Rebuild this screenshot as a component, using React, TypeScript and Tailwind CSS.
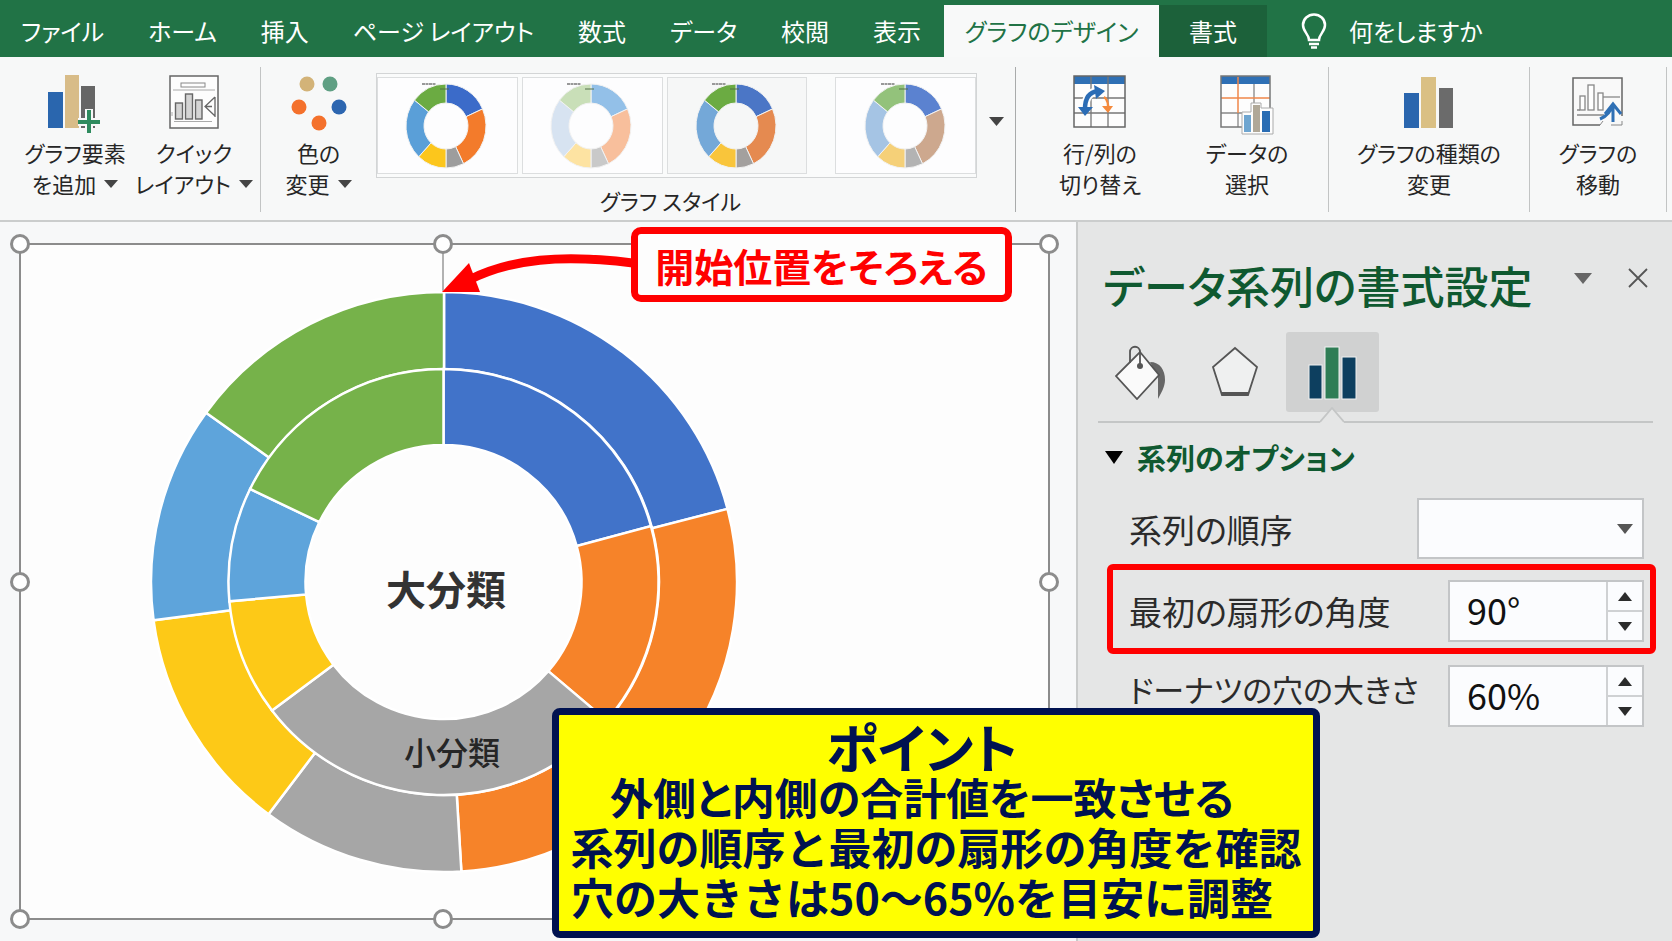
import React from "react";

interface Slice {
  to: number;
  color: string;
}

const outerSlices: Slice[] = [
  { to: 75.4, color: "#4173c9" },
  { to: 176.6, color: "#f68329" },
  { to: 216.8, color: "#a6a6a6" },
  { to: 262.4, color: "#fdc917" },
  { to: 305.7, color: "#5ea4db" },
  { to: 360, color: "#76b24a" },
];

const innerSlices: Slice[] = [
  { to: 74.8, color: "#4173c9" },
  { to: 130.6, color: "#f68329" },
  { to: 232.9, color: "#a6a6a6" },
  { to: 264.8, color: "#fdc917" },
  { to: 295.9, color: "#5ea4db" },
  { to: 360, color: "#76b24a" },
];

const thumbAngles = [66, 154, 180, 223, 308, 360];

const thumbStyles = [
  { name: "スタイル 1", colors: ["#3b6bc9", "#f37b2b", "#9d9d9d", "#fcc61c", "#5a9fd8", "#6bab42"], className: "bg-[#fdfdfe]" },
  { name: "スタイル 2", colors: ["#93c0e8", "#f8bf9c", "#c9c9c9", "#fde3a2", "#d7e3f1", "#c9dfb8"], className: "bg-[#fdfdfe]" },
  { name: "スタイル 3", colors: ["#4b76c6", "#e58a50", "#a3a09e", "#f9c53b", "#74a8d8", "#6bab42"], className: "bg-[#f6f7f7]" },
  { name: "スタイル 4", colors: ["#5b82d0", "#cda88e", "#b3b3b3", "#f5d078", "#a5c4e4", "#93c27b"], className: "bg-[#fdfdfe] ml-6" },
];

const point = (cx: number, cy: number, rx: number, ry: number, deg: number) => {
  const a = (deg * Math.PI) / 180;
  return `${(cx + rx * Math.sin(a)).toFixed(2)} ${(cy - ry * Math.cos(a)).toFixed(2)}`;
};

interface RingProps {
  slices: Slice[];
  cx: number;
  cy: number;
  outer: [number, number];
  inner: [number, number];
  stroke: string;
  strokeWidth: number;
}

const Ring = ({ slices, cx, cy, outer, inner, stroke, strokeWidth }: RingProps) => (
  <g stroke={stroke} strokeWidth={strokeWidth}>
    {slices.map((s, i) => {
      const from = i === 0 ? 0 : slices[i - 1].to;
      const large = s.to - from > 180 ? 1 : 0;
      const d = `M${point(cx, cy, outer[0], outer[1], from)} A${outer[0]} ${outer[1]} 0 ${large} 1 ${point(cx, cy, outer[0], outer[1], s.to)} L${point(cx, cy, inner[0], inner[1], s.to)} A${inner[0]} ${inner[1]} 0 ${large} 0 ${point(cx, cy, inner[0], inner[1], from)}Z`;
      return <path key={i} d={d} fill={s.color} />;
    })}
  </g>
);

const Triangle = ({ up, className }: { up?: boolean; className: string }) => (
  <svg viewBox="0 0 14 10" preserveAspectRatio="none" className={className} aria-hidden="true">
    <path d={up ? "M0 10h14L7 0z" : "M0 0h14L7 10z"} fill="currentColor" />
  </svg>
);

/* ---------- ribbon icons ---------- */

const AddElementIcon = () => (
  <svg width="54" height="58" viewBox="0 0 54 58">
    <rect x="0" y="17" width="15" height="36" fill="#2a66ae" />
    <rect x="17" y="0" width="14" height="53" fill="#d8bc88" />
    <rect x="33" y="11" width="14" height="42" fill="#666" />
    <path d="M41 34v24M30 47h22" stroke="#f7f8f8" strokeWidth="8" />
    <path d="M41 35v23M30 47h22" stroke="#2e8b5e" strokeWidth="4" />
  </svg>
);

const QuickLayoutIcon = () => (
  <svg width="50" height="54" viewBox="0 0 50 54" fill="none" stroke="#666">
    <rect x="1" y="1" width="48" height="52" fill="#fdfdfd" strokeWidth="1.5" />
    <rect x="12" y="8" width="24" height="4" stroke="#888" />
    <path d="M4 15h42" stroke="#aaa" />
    <g fill="#d4d4d4" strokeWidth="1.4">
      <rect x="6.500" y="28" width="7" height="16" />
      <rect x="16.500" y="19" width="7" height="25" />
      <rect x="26.500" y="25" width="6.500" height="19" />
    </g>
    <path d="M3 37v4M5 46.500h38" stroke="#aaa" />
    <path d="M46 22l-10 9.500L46 41M36 31.500h7M46 22v20" strokeWidth="1.300" />
  </svg>
);

const ColorsIcon = () => (
  <svg width="56" height="56" viewBox="0 0 56 56">
    <circle cx="16" cy="9" r="7.500" fill="#d3b378" />
    <circle cx="39" cy="9" r="7.500" fill="#5f9f83" />
    <circle cx="8" cy="32" r="7.500" fill="#f4712c" />
    <circle cx="48" cy="32" r="7.500" fill="#2c66b0" />
    <circle cx="28" cy="48" r="7.500" fill="#f4712c" />
  </svg>
);

const SwitchRowColumnIcon = () => (
  <svg width="54" height="54" viewBox="0 0 54 54" fill="none">
    <rect x="1" y="1" width="51" height="51" fill="#fdfdfd" />
    <rect x="1" y="1" width="51" height="8" fill="#2f70b5" />
    <path d="M1 23h51M1 38h51M18 1v51M35 1v51" stroke="#777" strokeWidth="1.300" />
    <rect x="1" y="1" width="51" height="51" stroke="#666" strokeWidth="1.500" />
    <path d="M12 34C12 23 16 17 25 16" stroke="#fdfdfd" strokeWidth="8" />
    <path d="M12 34C12 23 16 17 25 16" stroke="#2b6cb5" strokeWidth="4.500" />
    <path d="M21 10l11 6-9 8zM5 32h15l-8 9z" fill="#2b6cb5" />
    <path d="M31 22q5 3 4 14" stroke="#f58a3c" strokeWidth="2.500" />
    <path d="M29 31h11l-5 7z" fill="#f58a3c" />
  </svg>
);

const SelectDataIcon = () => (
  <svg width="54" height="60" viewBox="0 0 54 60" fill="none">
    <rect x="1" y="1" width="49" height="51" fill="#fdfdfd" />
    <rect x="1" y="1" width="49" height="8" fill="#2f70b5" />
    <path d="M1 38h49M34 9v43M18 38v14" stroke="#888" strokeWidth="1.300" />
    <path d="M1 23h49M18 2v36" stroke="#f0874a" strokeWidth="1.500" />
    <rect x="1" y="1" width="49" height="51" stroke="#777" strokeWidth="1.500" />
    <path d="M22 59V37h9V28h10v5h12v26z" fill="#fdfdfd" stroke="#aaa" />
    <rect x="24" y="40" width="7" height="17" fill="#6ea5d0" />
    <rect x="33" y="30" width="7" height="27" fill="#b0a898" />
    <rect x="42" y="36" width="8" height="21" fill="#2a6db4" />
  </svg>
);

const ChartTypeIcon = () => (
  <svg width="50" height="54" viewBox="0 0 50 54">
    <rect x="0" y="18" width="15" height="35" fill="#2a66ae" />
    <rect x="17" y="2" width="15" height="51" fill="#dac084" />
    <rect x="35" y="13" width="14" height="40" fill="#6b6b6b" />
  </svg>
);

const MoveChartIcon = () => (
  <svg width="52" height="52" viewBox="0 -2 52 52" fill="none">
    <path d="M28 48H1V1h49v38" fill="#f9f9f9" stroke="#666" strokeWidth="1.500" />
    <path d="M39 48h11v-4M28 48l3-4" stroke="#888" />
    <g fill="#fff" stroke="#888" strokeWidth="1.300">
      <path d="M28 20h20" />
      <rect x="8" y="19" width="5" height="14" />
      <rect x="16" y="8" width="6" height="25" />
      <rect x="26" y="16" width="5" height="17" />
    </g>
    <path d="M5 38h27M5 33h3" stroke="#888" strokeWidth="1.500" />
    <path d="M28 42q10-4 13-15M41 27v18M33 37l8-10 8 10" stroke="#2f70b5" strokeWidth="3" />
  </svg>
);

interface RibbonButtonProps {
  icon: React.ReactNode;
  lines: [string, string];
  menu?: boolean;
  className: string;
}

const RibbonButton = ({ icon, lines, menu, className }: RibbonButtonProps) => (
  <button className={`flex shrink-0 flex-col items-center whitespace-nowrap text-[22px] leading-[31px] text-[#262626] ${className}`}>
    <span className="flex h-[62px] items-start">{icon}</span>
    <span>{lines[0]}</span>
    <span className="flex items-center gap-2">
      {lines[1]}
      {menu && <Triangle className="h-2 w-[14px] text-[#444]" />}
    </span>
  </button>
);

const StyleThumb = ({ style }: { style: (typeof thumbStyles)[number] }) => (
  <button aria-label={style.name} className={`flex h-[97px] flex-1 items-center justify-center border border-[#dcdedf] ${style.className}`}>
    <svg width="86" height="90" viewBox="0 0 86 90">
      <Ring
        slices={thumbAngles.map((to, i) => ({ to, color: style.colors[i] }))}
        cx={42}
        cy={45}
        outer={[40, 42]}
        inner={[22, 23]}
        stroke="#f2f2f2"
        strokeWidth={1}
      />
      <path d="M18 3h14" stroke="#999" strokeWidth="2" strokeDasharray="3 0.5" />
      <path d="M36 8h9" stroke="#55714a" strokeWidth="1" />
    </svg>
  </button>
);

const tabs = ["ファイル", "ホーム", "挿入", "ページ レイアウト", "数式", "データ", "校閲", "表示"];

const Ribbon = () => (
  <header>
    <nav className="flex h-[57px] items-stretch overflow-hidden whitespace-nowrap bg-[#217346] text-[24px] leading-8 text-white">
      {tabs.map((t) => (
        <button key={t} className="shrink-0 pl-[21px] pr-[23px] pt-1">
          {t}
        </button>
      ))}
      <button className="mt-[5px] w-[215px] shrink-0 bg-[#f8f9f9] text-[#217346]">グラフのデザイン</button>
      <button className="mt-[5px] w-[108px] shrink-0 bg-[#1c613a]">書式</button>
      <button className="flex shrink-0 items-center gap-[22px] pl-[34px] pt-1">
        <svg width="26" height="36" viewBox="0 0 26 36" fill="none" stroke="#fff" strokeWidth="2.500">
          <path d="M8 27c0-6-6-8-6-15C2 6 7 1.500 13 1.500S24 6 24 12c0 7-6 9-6 15z" />
          <path d="M8 31h10M10 34.500h6" />
        </svg>
        何をしますか
      </button>
    </nav>
    <div className="flex h-[165px] items-stretch border-b-2 border-[#cbcdcd] bg-[#f7f8f8] pb-2 pt-[10px]">
      <div className="flex shrink-0 border-r border-[#c2c4c4] pl-4 pr-[6px] pt-2">
        <RibbonButton className="w-[118px]" icon={<AddElementIcon />} lines={["グラフ要素", "を追加"]} menu />
        <RibbonButton className="w-[120px]" icon={<QuickLayoutIcon />} lines={["クイック", "レイアウト"]} menu />
      </div>
      <div className="flex min-w-0 flex-1 border-r border-[#a9abab]">
        <RibbonButton className="w-[115px] pt-2" icon={<ColorsIcon />} lines={["色の", "変更"]} menu />
        <div className="flex min-w-0 flex-1 flex-col pt-[6px] text-center">
          <div className="flex gap-1 border border-[#d3d5d6] bg-[#fafbfb] py-[3px]">
            {thumbStyles.map((s) => (
              <StyleThumb key={s.name} style={s} />
            ))}
          </div>
          <p className="pr-3 pt-[7px] text-[22px] leading-[31px] text-[#262626]">グラフ スタイル</p>
        </div>
        <button aria-label="その他のスタイル" className="flex w-[38px] shrink-0 justify-center pt-[50px]">
          <Triangle className="h-[9px] w-[15px] text-[#444]" />
        </button>
      </div>
      <div className="flex shrink-0 border-r border-[#c2c4c4] pr-[18px] pt-2">
        <RibbonButton className="w-[168px]" icon={<SwitchRowColumnIcon />} lines={["行/列の", "切り替え"]} />
        <RibbonButton className="w-[126px]" icon={<SelectDataIcon />} lines={["データの", "選択"]} />
      </div>
      <div className="flex shrink-0 border-r border-[#c2c4c4] pt-2">
        <RibbonButton className="w-[200px]" icon={<ChartTypeIcon />} lines={["グラフの種類の", "変更"]} />
      </div>
      <div className="mr-[5px] flex shrink-0 border-r border-[#c2c4c4] pt-2">
        <RibbonButton className="w-[136px]" icon={<MoveChartIcon />} lines={["グラフの", "移動"]} />
      </div>
    </div>
  </header>
);

const handles = [
  "-left-[11px] -top-[11px]",
  "left-[412px] -top-[11px]",
  "-right-[11px] -top-[11px]",
  "-left-[11px] top-1/2 -mt-[10px]",
  "-right-[11px] top-1/2 -mt-[10px]",
  "-left-[11px] -bottom-[11px]",
  "left-[412px] -bottom-[11px]",
  "-right-[11px] -bottom-[11px]",
];

const ChartArea = () => (
  <section aria-label="グラフ エリア" className="flex min-w-0 flex-1 bg-[#f7f8f9] pb-[21px] pl-[19px] pr-[26px] pt-[21px]">
    <div className="relative flex-1 border-2 border-[#8c8c8c] bg-[#fdfdfd]">
      <svg width="600" height="630" viewBox="0 0 600 630" className="ml-[123px]">
        <path d="M299 0v48" stroke="#999" strokeWidth="1.500" />
        <Ring slices={outerSlices} cx={300} cy={337} outer={[293, 290]} inner={[215, 213]} stroke="#fff" strokeWidth={2.5} />
        <Ring slices={innerSlices} cx={299.5} cy={337} outer={[215, 213]} inner={[138, 137]} stroke="#fff" strokeWidth={2.5} />
        <text x="302" y="360" textAnchor="middle" fontSize="40" fontWeight="700" fill="#333">
          大分類
        </text>
        <text x="308" y="520" textAnchor="middle" fontSize="32" fontWeight="500" fill="#262626">
          小分類
        </text>
      </svg>
      {handles.map((h) => (
        <span key={h} className={`absolute size-5 rounded-full border-[3px] border-[#8c8c8c] bg-white ${h}`} />
      ))}
    </div>
  </section>
);

interface SpinnerProps {
  id: string;
  value: string;
}

const Spinner = ({ id, value }: SpinnerProps) => (
  <div className="flex h-[62px] w-[196px] shrink-0 border-2 border-[#c3c5c7] bg-[#fbfcfe]">
    <input id={id} defaultValue={value} className="min-w-0 flex-1 bg-transparent pb-1 pl-[17px] text-[36px] leading-[50px] text-[#111] outline-none" />
    <div className="flex w-[36px] flex-col border-l-2 border-[#cfd1d3] text-[#2b2b2b]">
      <button type="button" aria-label="増やす" className="flex flex-1 items-center justify-center border-b-2 border-[#cfd1d3]">
        <Triangle up className="h-[9px] w-[14px]" />
      </button>
      <button type="button" aria-label="減らす" className="flex flex-1 items-center justify-center">
        <Triangle className="h-[9px] w-[14px]" />
      </button>
    </div>
  </div>
);

const FormatPane = () => (
  <aside className="w-[596px] shrink-0 border-l-2 border-[#c9cbcb] bg-[#e5e6e6] pt-[31px]">
    <div className="flex items-start pl-[25px] pr-6">
      <h1 className="flex-1 whitespace-nowrap text-[44px] font-medium leading-[64px] text-[#0f5930]">データ系列の書式設定</h1>
      <button aria-label="作業ウィンドウのオプション" className="mt-5">
        <Triangle className="h-[11px] w-[18px] text-[#666]" />
      </button>
      <button aria-label="閉じる" className="ml-[36px] mt-[15px]">
        <svg width="20" height="20" viewBox="0 0 20 20" stroke="#555" strokeWidth="1.800">
          <path d="M1 1l18 18M19 1L1 19" />
        </svg>
      </button>
    </div>

    <div className="flex h-[80px] items-stretch pl-[37px] mt-[15px]">
      <button aria-label="塗りつぶしと線" className="flex w-[52px] items-center">
        <svg width="52" height="56" viewBox="0 0 52 56" fill="none">
          <path d="M35 18c10 0 15 8 15 18 0 7-4 13-7 19V33z" fill="#666" />
          <path d="M25 8L44 31 22 55 1 32z" fill="#fafafa" stroke="#555" strokeWidth="1.800" />
          <path d="M15 19V8c0-7 10-7 10 0v14" stroke="#555" strokeWidth="1.800" />
          <circle cx="25" cy="22" r="3" fill="#555" />
        </svg>
      </button>
      <button aria-label="効果" className="ml-[44px] flex w-[48px] items-center">
        <svg width="48" height="52" viewBox="0 0 48 52" fill="none">
          <path d="M24 2l22 19-9 28H11L2 21z" fill="#eff0f0" stroke="#555" strokeWidth="1.800" />
          <path d="M11 48h26" stroke="#555" strokeWidth="4" />
        </svg>
      </button>
      <button aria-label="系列のオプション" className="ml-[27px] flex w-[93px] justify-center rounded-[3px] bg-[#d0d1d1] pt-[14px]">
        <svg width="50" height="54" viewBox="0 0 50 54" stroke="#f0f1f1" strokeWidth="1">
          <rect x="1" y="19" width="13" height="34" fill="#0d3f5f" />
          <rect x="17" y="1" width="14" height="52" fill="#2f7d55" />
          <rect x="34" y="11" width="14" height="42" fill="#0d3f5f" />
        </svg>
      </button>
    </div>
    <div className="-mt-[5px] ml-5 mr-[19px] flex h-[16px] items-end">
      <span className="h-[2px] w-[222px] bg-[#c4c6c6]" />
      <svg width="24" height="16" viewBox="0 0 24 16">
        <path d="M0 15L12 1l12 14v1H0z" fill="#e5e6e6" />
        <path d="M0 15L12 1l12 14" fill="none" stroke="#c4c6c6" strokeWidth="1.800" />
      </svg>
      <span className="h-[2px] flex-1 bg-[#c4c6c6]" />
    </div>

    <h2 className="flex items-center gap-[14px] pl-[27px] pt-[14px] text-[29px] font-bold leading-[40px] text-[#0f5930]">
      <Triangle className="h-[13px] w-[18px] text-black" />
      系列のオプション
    </h2>

    <form className="flex flex-col pl-[29px] pr-4 pt-[21px] text-[#2b2b2b]">
      <div className="flex items-center justify-between pl-[22px] pr-3">
        <label htmlFor="series-order" className="text-[33px] leading-[50px]">
          系列の順序
        </label>
        <div className="relative">
          <select id="series-order" className="block h-[61px] w-[227px] appearance-none border-2 border-[#c3c5c7] bg-[#fbfcfe] px-4 text-[28px]">
            <option></option>
          </select>
          <Triangle className="pointer-events-none absolute right-[11px] top-[26px] h-[10px] w-[16px] text-[#555]" />
        </div>
      </div>
      <div className="mt-[5px] flex h-[90px] items-center justify-between rounded-[6px] border-[6px] border-[#ff0000] pl-4 pr-[6px] pt-1">
        <label htmlFor="first-angle" className="text-[33px] leading-[50px]">
          最初の扇形の角度
        </label>
        <Spinner id="first-angle" value="90°" />
      </div>
      <div className="mt-[11px] flex items-start justify-between pl-[22px] pr-3">
        <label htmlFor="hole-size" className="whitespace-nowrap text-[31px] leading-[48px]">
          ドーナツの穴の大きさ
        </label>
        <Spinner id="hole-size" value="60%" />
      </div>
    </form>
  </aside>
);

const App = () => {
  return (
    <div className="flex min-h-screen flex-col bg-white font-['Noto_Sans_CJK_JP','Noto_Sans',sans-serif] [font-feature-settings:'palt']">
      <Ribbon />
      <main className="relative flex flex-1 items-stretch">
        <ChartArea />
        <FormatPane />

        {/* start position callout */}
        <svg width="192" height="44" viewBox="0 0 192 44" className="absolute left-[441px] top-[32px]">
          <path d="M28 26C70 5 120 0 192 9" fill="none" stroke="#ff0000" strokeWidth="9" />
          <path d="M1 38L28 9l11 29z" fill="#ff0000" />
        </svg>
        <p className="absolute left-[631px] top-[5px] flex h-[75px] w-[381px] items-center justify-center whitespace-nowrap rounded-[10px] border-[7px] border-[#ff0000] bg-[#fdfdfd] text-[39px] font-bold leading-[50px] text-[#ff0000]">
          開始位置をそろえる
        </p>

        {/* summary note */}
        <div className="absolute bottom-[3px] left-[552px] h-[230px] w-[768px] whitespace-nowrap rounded-[8px] border-[7px] border-[#001250] bg-[#ffff00] pt-[6px] text-center text-[43px] font-bold leading-[50px] text-[#001250] [font-feature-settings:normal]">
          <h2 className="pr-7 text-[53px] [font-feature-settings:'palt']">ポイント</h2>
          <p className="pr-7 [font-feature-settings:'palt']">外側と内側の合計値を一致させる</p>
          <p>系列の順序と最初の扇形の角度を確認</p>
          <p className="pr-7">穴の大きさは50〜65%を目安に調整</p>
        </div>
      </main>
    </div>
  );
};

export default App;
